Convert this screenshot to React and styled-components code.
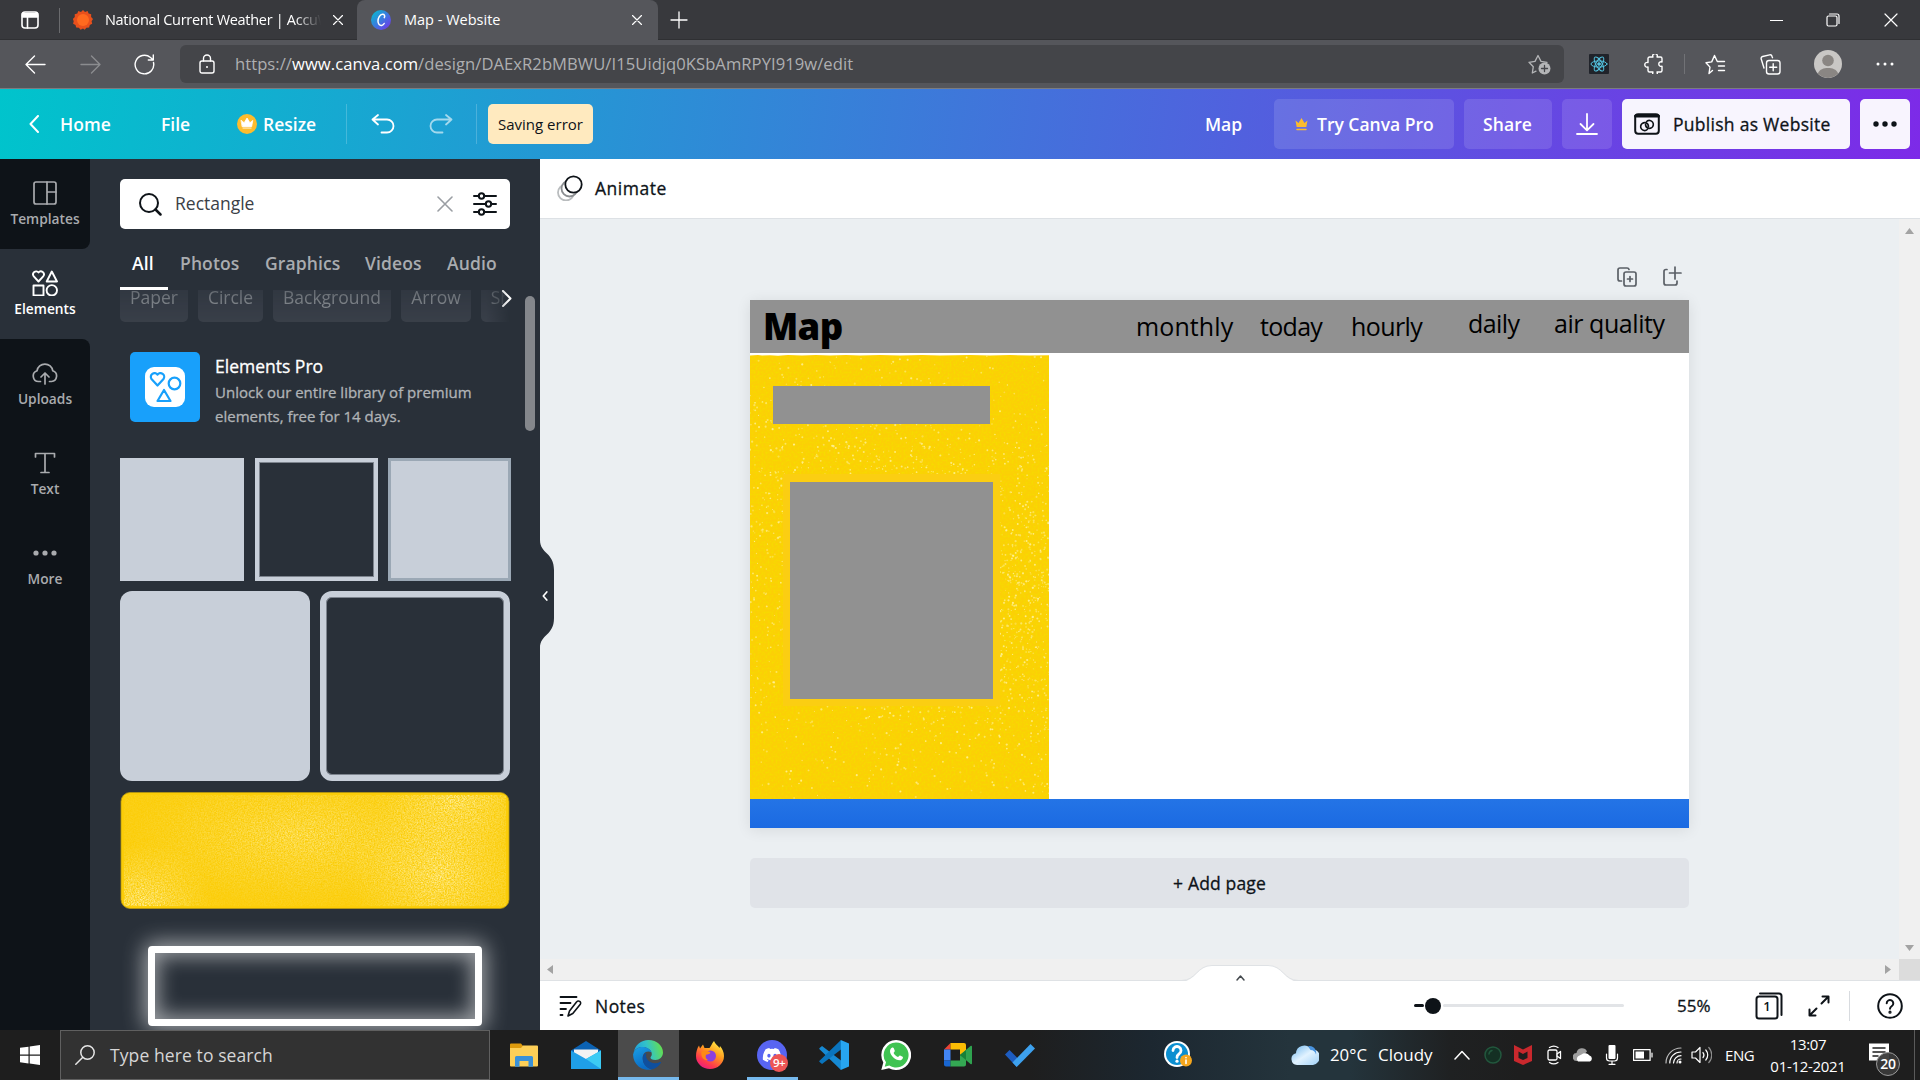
import React from "react";
import styled, { createGlobalStyle, css } from "styled-components";
import { FaDiscord } from "react-icons/fa";

const Global = createGlobalStyle`
  * { box-sizing: border-box; }
  html, body { margin: 0; padding: 0; overflow: hidden; background: #1e1e1e; }
  body { font-family: "Open Sans", "Noto Sans", sans-serif; }
  svg { display: block; flex: none; }
`;

const Screen = styled.div`
  width: 1920px;
  height: 1080px;
  display: flex;
  flex-direction: column;
  overflow: hidden;
`;

const Label = styled.span`
  display: block;
  flex: none;
  white-space: nowrap;
  width: ${(p) => (p.$w ? `${p.$w}px` : "auto")};
  margin-left: ${(p) => p.$ml || 0}px;
  margin-bottom: ${(p) => p.$mb || 0}px;
  font-size: ${(p) => p.$size || 17.5}px;
  font-weight: ${(p) => p.$weight || 400};
  letter-spacing: ${(p) => p.$ls || 0}px;
  line-height: ${(p) => p.$lh || 24}px;
  color: ${(p) => p.$color || "#0e1318"};
  text-align: ${(p) => p.$align || "left"};
  ${(p) => p.$medium && css`-webkit-text-stroke: 0.3px currentColor;`}
`;

const Glyph = styled.svg.attrs((p) => ({
  width: p.$w,
  height: p.$h || p.$w,
  viewBox: `0 0 ${p.$w} ${p.$h || p.$w}`,
  fill: "none",
  strokeLinecap: "round",
  strokeLinejoin: "round",
}))`
  margin-left: ${(p) => p.$ml || 0}px;
  stroke: ${(p) => p.$color || "#fff"};
  stroke-width: ${(p) => p.$sw || 1.4};
`;

const Rule = styled.i`
  flex: none;
  width: 1px;
  height: ${(p) => p.$h}px;
  margin-left: ${(p) => p.$ml || 0}px;
  background: ${(p) => p.$color};
`;

/* ---------- browser chrome ---------- */

const TabStrip = styled.div`
  height: 40px;
  flex: none;
  display: flex;
  align-items: stretch;
  background: #38393d;
  box-shadow: inset 0 -1px 0 #2f3033;
`;

const PassiveTab = styled.div`
  width: 357px;
  display: flex;
  align-items: center;
`;

const FadingTitle = styled.div`
  width: 216px;
  margin-left: 12px;
  overflow: hidden;
  mask-image: linear-gradient(90deg, #000 88%, transparent 100%);
`;

const ActiveTab = styled.div`
  width: 301px;
  display: flex;
  align-items: center;
  background: #55565b;
  border-radius: 8px 8px 0 0;
`;

const StripTail = styled.div`
  flex: 1;
  display: flex;
  align-items: center;
`;

const AddressRow = styled.div`
  height: 49px;
  flex: none;
  display: flex;
  align-items: center;
  background: #55565b;
  border-bottom: 1px solid #7b7c80;
`;

const AddressField = styled.div`
  width: 1384px;
  height: 38px;
  margin-left: 25px;
  display: flex;
  align-items: center;
  background: #444549;
  border-radius: 6px;
`;

const Url = styled.div`
  width: 1293px;
  margin-left: 20px;
  font-size: 16.6px;
  line-height: 24px;
  letter-spacing: 0.05px;
  color: #aeafb1;
  white-space: nowrap;
  b { font-weight: 400; color: #fff; }
`;

function Browser() {
  return (
    <>
      <TabStrip>
        <PassiveTab>
          <Glyph $w={18} $ml={21} $sw={1.6}>
            <rect x="1" y="1" width="16" height="16" rx="3" />
            <path d="M1.5 2.6H16.5V6H1.5Z" fill="#fff" />
            <path d="M6.5 6V17" />
          </Glyph>
          <Rule $h={25} $ml={20} $color="#6a6b6e" />
          <Glyph $w={20} $ml={13} $color="none">
            <path
              d="M10 0l2 2 2.600-1 1 2.600 2.600.6-.1 2.700 1.900 2-1.400 2.300.6 2.600-2.400 1.200-.7 2.600-2.700.1-1.700 2.100L10 18.500 7.600 19.800l-1.700-2.100-2.700-.1-.7-2.600L.1 13.800l.6-2.600L-.1 8.900l1.900-2L1.700 4.200l2.600-.6 1-2.600 2.700 1z"
              fill="#e8501c"
            />
            <circle cx="10" cy="10" r="6" fill="#ff6a1f" />
          </Glyph>
          <FadingTitle>
            <Label $size={14.5} $ls={-0.3} $color="#fff">National Current Weather | AccuWeather</Label>
          </FadingTitle>
          <Glyph $w={10} $ml={12} $sw={1.2}><path d="M.5.500l9 9M9.500.500l-9 9" /></Glyph>
        </PassiveTab>
        <ActiveTab>
          <Glyph $w={20} $ml={14} $color="none">
            <defs>
              <linearGradient id="cv" x1="0" y1="0" x2="1" y2="1">
                <stop offset="0" stopColor="#00c4cc" />
                <stop offset=".5" stopColor="#3a7be0" />
                <stop offset="1" stopColor="#7d2ae8" />
              </linearGradient>
            </defs>
            <circle cx="10" cy="10" r="10" fill="url(#cv)" />
            <path d="M13.300 7.600c.9-1.700.2-3.500-1.800-3.400C8.900 4.400 6.900 7.900 7 11.200c.1 3 1.700 4.600 3.700 4.200 1.200-.2 2-1 2.500-1.900" stroke="#fff" strokeWidth="1.500" />
          </Glyph>
          <Label $w={98} $ml={13} $size={14.5} $color="#fff">Map - Website</Label>
          <Glyph $w={10} $ml={130} $sw={1.2}><path d="M.5.500l9 9M9.500.500l-9 9" /></Glyph>
        </ActiveTab>
        <StripTail>
          <Glyph $w={18} $ml={12} $sw={1.3}><path d="M9 1V17M1 9H17" /></Glyph>
          <Glyph $w={13} $ml={1082} $sw={1.200}><path d="M0 6.500H13" /></Glyph>
          <Glyph $w={14} $ml={43} $sw={1.2}>
            <rect x="1" y="3" width="10" height="10" rx="1.500" />
            <path d="M3.500 1H11a2 2 0 0 1 2 2v7.500" />
          </Glyph>
          <Glyph $w={14} $ml={44} $sw={1.2}><path d="M1 1l12 12M13 1L1 13" /></Glyph>
        </StripTail>
      </TabStrip>
      <AddressRow>
        <Glyph $w={21} $ml={25} $sw={1.4}><path d="M20 10.500H1M9.500 2L1 10.500 9.500 19" /></Glyph>
        <Glyph $w={21} $ml={34} $sw={1.400} $color="#8b8c8f"><path d="M1 10.500H20M11.500 2L20 10.500 11.500 19" /></Glyph>
        <Glyph $w={21} $ml={33} $sw={1.400}>
          <path d="M19.500 8.500A9.300 9.300 0 1 1 16.500 3.500L19 5.700M19.300 1V6H14.300" />
        </Glyph>
        <AddressField>
          <Glyph $w={16} $h={20} $ml={19} $sw={1.400}>
            <rect x="1" y="7" width="14" height="12" rx="2" />
            <path d="M4.500 7V4.500a3.500 3.500 0 0 1 7 0V7" />
            <circle cx="8" cy="13" r="1" fill="#fff" stroke="none" />
          </Glyph>
          <Url>https://<b>www.canva.com</b>/design/DAExR2bMBWU/I15Uidjq0KSbAmRPYI919w/edit</Url>
          <Glyph $w={23} $h={22} $color="#b4b5b7" $sw={1.300}>
            <path d="M8 18.200L4.300 20l1-6.300L1 9.300l6-.9L10 2.500l3 5.900 6 .9-1.500 1.500" />
            <circle cx="16.500" cy="15.500" r="6" fill="#b4b5b7" stroke="none" />
            <path d="M16.500 12.500v6M13.500 15.500h6" stroke="#444549" />
          </Glyph>
        </AddressField>
        <Glyph $w={20} $ml={25} $color="#53c1de" $sw={1}>
          <rect width="20" height="20" rx="1" fill="#20232a" stroke="none" />
          <ellipse cx="10" cy="10" rx="8" ry="3.100" />
          <ellipse cx="10" cy="10" rx="8" ry="3.100" transform="rotate(60 10 10)" />
          <ellipse cx="10" cy="10" rx="8" ry="3.100" transform="rotate(120 10 10)" />
          <circle cx="10" cy="10" r="1.300" fill="#53c1de" />
        </Glyph>
        <Glyph $w={20} $ml={35} $sw={1.400}>
          <path d="M4 4.500a1.500 1.500 0 0 1 1.500-1.500H9a2.300 2.300 0 1 1 4 0h3.500A1.500 1.500 0 0 1 18 4.500V8a2.300 2.300 0 1 0 0 4.200v4.300a1.500 1.500 0 0 1-1.500 1.500H13a2.300 2.300 0 1 1-4 0H5.500A1.500 1.500 0 0 1 4 16.500V13a2.400 2.400 0 1 1 0-4.500z" />
        </Glyph>
        <Rule $h={20} $ml={20} $color="#717276" />
        <Glyph $w={21} $ml={20} $sw={1.400}>
          <path d="M7.500 16.500L4 19.500l1-6.400L1 8.700l5.700-.8L9.500 1.500l2.800 6H19.500M13.500 12h6M13.500 16.500h6" />
        </Glyph>
        <Glyph $w={21} $ml={34} $sw={1.400}>
          <rect x="6.500" y="6.500" width="13.500" height="13.500" rx="2.500" />
          <path d="M13.200 9.800v7M9.700 13.300h7M4 14L1.200 5a2 2 0 0 1 1.400-2.500l7-1.600a2 2 0 0 1 2.400 1.400l.5 1.400" />
        </Glyph>
        <Glyph $w={28} $ml={33} $color="none">
          <circle cx="14" cy="14" r="14" fill="#c9c7c5" />
          <circle cx="14" cy="10.500" r="5.800" fill="#8a8683" />
          <path d="M3.800 23.500c2-4.300 5.800-5.500 10.200-5.500s8.200 1.200 10.200 5.500A14 14 0 0 1 3.800 23.500z" fill="#8a8683" />
        </Glyph>
        <Glyph $w={18} $h={4} $ml={34} $color="none">
          <g fill="#fff"><circle cx="2" cy="2" r="1.500" /><circle cx="9" cy="2" r="1.500" /><circle cx="16" cy="2" r="1.500" /></g>
        </Glyph>
      </AddressRow>
    </>
  );
}

/* ---------- editor header ---------- */

const EditorHeader = styled.header`
  height: 70px;
  flex: none;
  display: flex;
  align-items: center;
  background: linear-gradient(98deg, #00c4cc, #7d2ae8);
`;

const SavingNote = styled.div`
  width: 105px;
  height: 40px;
  margin-left: 11px;
  display: flex;
  align-items: center;
  background: #ffeabf;
  border-radius: 5px;
`;

const HeaderButton = styled.div`
  width: ${(p) => p.$w}px;
  height: 50px;
  margin-left: ${(p) => p.$ml ?? 10}px;
  display: flex;
  align-items: center;
  border-radius: 5px;
  background: ${(p) => (p.$solid ? "rgba(255,255,255,.95)" : "rgba(255,255,255,.12)")};
`;

const CROWN = "M.5 2.500l3 2.500L6.500 0l3 5 3-2.500L11.300 9H1.700z";

function Header() {
  return (
    <EditorHeader>
      <Glyph $w={10} $h={18} $ml={29} $sw={2}><path d="M9 1L1.500 9 9 17" /></Glyph>
      <Label $w={101} $ml={21} $weight={600} $ls={0.1} $color="#fff">Home</Label>
      <Label $w={76} $weight={600} $color="#fff">File</Label>
      <Glyph $w={20} $color="none">
        <circle cx="10" cy="10" r="10" fill="#fdbc2d" />
        <path d={`${CROWN}M2.300 10.500h8.400`} transform="translate(3.800 4) scale(.96)" fill="#fff" stroke="#fff" strokeWidth=".8" />
      </Glyph>
      <Label $w={83} $ml={6} $weight={600} $color="#fff">Resize</Label>
      <Rule $h={40} $color="rgba(255,255,255,.2)" />
      <Glyph $w={24} $h={22} $ml={24} $sw={1.800}>
        <path d="M7 2L1.500 6.500 7 11.500M1.500 6.500H16a6.500 6.500 0 0 1 0 13H10.500" />
      </Glyph>
      <Glyph $w={24} $h={22} $ml={34} $sw={1.800} $color="rgba(255,255,255,.6)">
        <path d="M17 2L22.500 6.500 17 11.500M22.500 6.500H8a6.500 6.500 0 0 0 0 13H13.500" />
      </Glyph>
      <Rule $h={40} $ml={23} $color="rgba(255,255,255,.2)" />
      <SavingNote><Label $ml={10} $size={15}>Saving error</Label></SavingNote>
      <Label $w={69} $ml={612} $weight={600} $color="#fff">Map</Label>
      <HeaderButton $w={180} $ml={0}>
        <Glyph $w={13} $ml={21} $color="none">
          <path d={CROWN} fill="#fdbc2d" />
          <path d="M2 11.500h9" stroke="#fdbc2d" strokeWidth="1.500" />
        </Glyph>
        <Label $ml={9} $weight={600} $color="#fff">Try Canva Pro</Label>
      </HeaderButton>
      <HeaderButton $w={88}><Label $ml={19} $weight={600} $ls={0.1} $color="#fff">Share</Label></HeaderButton>
      <HeaderButton $w={50}>
        <Glyph $w={22} $ml={14} $sw={1.800}><path d="M11 1V17M4.500 11L11 17.300 17.500 11M1 21H21" /></Glyph>
      </HeaderButton>
      <HeaderButton $w={228} $solid>
        <Glyph $w={26} $h={22} $ml={12} $color="#0e1318" $sw={2}>
          <rect x="1.200" y="1.200" width="23.600" height="19.600" rx="3" />
          <path d="M1.500 3H24.500" strokeWidth="3" />
          <g strokeWidth="1.600">
            <path d="M13.800 15.800a3.700 3.700 0 0 1-3.800 1.700 4 4 0 0 1-3.300-4.600 4 4 0 0 1 4.600-3.200 4 4 0 0 1 3.200 4" />
            <path d="M12.200 9.200a3.700 3.700 0 0 1 3.800-1.700 4 4 0 0 1 3.300 4.600 4 4 0 0 1-4.600 3.200 4 4 0 0 1-3.200-4" />
          </g>
        </Glyph>
        <Label $ml={13} $medium $ls={0.28}>Publish as Website</Label>
      </HeaderButton>
      <HeaderButton $w={50} $solid>
        <Glyph $w={24} $h={6} $ml={13} $color="none">
          <g fill="#0e1318"><circle cx="3" cy="3" r="2.700" /><circle cx="12" cy="3" r="2.700" /><circle cx="21" cy="3" r="2.700" /></g>
        </Glyph>
      </HeaderButton>
    </EditorHeader>
  );
}

/* ---------- left rail ---------- */

const Editor = styled.div`
  height: 871px;
  flex: none;
  display: flex;
`;

const Rail = styled.nav`
  width: 90px;
  flex: none;
  background: #293039;
  display: flex;
  flex-direction: column;
`;

const RailGroup = styled.div`
  flex: ${(p) => (p.$grow ? 1 : "none")};
  background: ${(p) => (p.$active ? "#293039" : "#0e1318")};
  border-radius: ${(p) => p.$radius || 0};
`;

const RailItem = styled.div`
  height: 90px;
  padding-top: 19px;
  display: flex;
  flex-direction: column;
  align-items: center;
`;

const RailIcon = styled.div`
  height: 30px;
  display: flex;
  align-items: center;
`;

const MUTED = "#a9abae";

function RailEntry({ name, active, children }) {
  return (
    <RailItem>
      <RailIcon>{children}</RailIcon>
      <Label $size={13.75} $weight={600} $lh={22} $color={active ? "#fff" : MUTED}>{name}</Label>
    </RailItem>
  );
}

function LeftRail() {
  return (
    <Rail>
      <RailGroup $radius="0 0 8px 0">
        <RailEntry name="Templates">
          <Glyph $w={24} $color={MUTED} $sw={1.700}>
            <rect x="1" y="1" width="22" height="22" rx="2" /><path d="M14 1V23M14 11H23" />
          </Glyph>
        </RailEntry>
      </RailGroup>
      <RailGroup $active>
        <RailEntry name="Elements" active>
          <Glyph $w={26} $sw={1.900}>
            <path d="M6.500 11.500L1.800 6.300a3 3 0 0 1 4.700-3.800 3 3 0 0 1 4.700 3.800zM19.800 1.500L25 11.500H14.700zM1.500 15.500h10v10h-10z" />
            <circle cx="19.800" cy="20.300" r="5.200" />
          </Glyph>
        </RailEntry>
      </RailGroup>
      <RailGroup $radius="0 8px 0 0" $grow>
        <RailEntry name="Uploads">
          <Glyph $w={26} $h={24} $color={MUTED} $sw={1.700}>
            <path d="M8.500 20.500H6.500A5.500 5.500 0 0 1 5 9.800 8 8 0 0 1 20.800 9.800 5.500 5.500 0 0 1 19.500 20.500H17.500M13 23V12.500M9 16l4-4 4 4" />
          </Glyph>
        </RailEntry>
        <RailEntry name="Text">
          <Glyph $w={22} $color={MUTED} $sw={1.700}><path d="M1.500 5V1.500H20.500V5M11 1.500V20.500M7 20.500H15" /></Glyph>
        </RailEntry>
        <RailEntry name="More">
          <Glyph $w={24} $h={6} $color="none">
            <g fill={MUTED}><circle cx="3" cy="3" r="2.600" /><circle cx="12" cy="3" r="2.600" /><circle cx="21" cy="3" r="2.600" /></g>
          </Glyph>
        </RailEntry>
      </RailGroup>
    </Rail>
  );
}

/* ---------- elements panel ---------- */

const Panel = styled.aside`
  width: 450px;
  flex: none;
  display: flex;
  background: #293039;
  overflow: hidden;
`;

const PanelBody = styled.div`
  width: 392px;
  margin-left: 30px;
  padding-top: 20px;
  display: flex;
  flex-direction: column;
`;

const SearchBox = styled.div`
  width: 390px;
  height: 50px;
  flex: none;
  display: flex;
  align-items: center;
  padding-bottom: 1px;
  background: #fff;
  border-radius: 5px;
`;

const Tabs = styled.div`
  height: 61px;
  flex: none;
  display: flex;
  align-items: stretch;
`;

const Tab = styled.div`
  width: ${(p) => p.$w}px;
  padding: 22px 0 0 12px;
  border-bottom: 3px solid ${(p) => (p.$active ? "#fff" : "transparent")};
`;

const ChipRow = styled.div`
  height: 32px;
  flex: none;
  display: flex;
  align-items: flex-start;
  overflow: hidden;
`;

const Chips = styled.div`
  width: 390px;
  flex: none;
  margin-top: -18px;
  display: flex;
  gap: 10px;
  overflow: hidden;
  mask-image: linear-gradient(180deg, rgba(0,0,0,.5) 34%, #000 100%), linear-gradient(90deg, #000 366px, transparent 390px);
  mask-composite: intersect;
`;

const Chip = styled.div`
  width: ${(p) => p.$w}px;
  height: 50px;
  flex: none;
  display: flex;
  align-items: center;
  justify-content: center;
  border-radius: 5px;
  background: #393f49;
`;

const ChipArrow = styled.div`
  margin-left: -8px;
`;

const ProBanner = styled.div`
  height: 136px;
  flex: none;
  padding: 30px 0 0 10px;
  display: flex;
`;

const ProIcon = styled.div`
  width: 70px;
  height: 70px;
  display: flex;
  align-items: center;
  justify-content: center;
  border-radius: 5px;
  background: #18a0fb;
`;

const ProText = styled.div`
  margin: 2px 0 0 15px;
`;

const Shelf = styled.div`
  flex: none;
  display: flex;
  justify-content: space-between;
  width: ${(p) => p.$w}px;
  margin-bottom: 10px;
`;

const Square = styled.div`
  width: ${(p) => p.$s}px;
  height: ${(p) => p.$h || p.$s}px;
  border-radius: ${(p) => p.$r || 0}px;
  border: ${(p) => p.$border || "none"};
  background: ${(p) => (p.$hollow ? "transparent" : "#c8cfd9")};
  ${(p) => p.$hollow && css`box-shadow: inset 0 0 0 1px #7d848e;`}
`;

const NeonFrame = styled.div`
  width: 334px;
  height: 80px;
  flex: none;
  margin: 36px 0 0 28px;
  border: 7px solid #fff;
  border-radius: 4px;
  box-shadow: 0 0 22px 3px rgba(255,255,255,.6), inset 0 0 20px 3px rgba(255,255,255,.55);
`;

const PanelScroll = styled.div`
  width: 10px;
  height: 135px;
  margin: 137px 0 0 13px;
  border-radius: 5px;
  background: #84878c;
`;

function seeded(seed) {
  let s = seed;
  return () => {
    s = (s * 16807) % 2147483647;
    return s / 2147483647;
  };
}

function BrushedSwatch() {
  return (
    <svg width="390" height="119" viewBox="0 0 390 119">
      <defs>
        <filter id="swGrain" x="0" y="0" width="100%" height="100%">
          <feTurbulence type="fractalNoise" baseFrequency=".7" numOctaves="3" seed="4" />
          <feColorMatrix values="0 0 0 0 1  0 0 0 0 .88  0 0 0 0 .4  1.800 0 0 0 -.45" />
        </filter>
        <radialGradient id="swGlow">
          <stop offset="0" stopColor="#fff" stopOpacity="1" />
          <stop offset=".5" stopColor="#fff" stopOpacity=".45" />
          <stop offset="1" stopColor="#fff" stopOpacity="0" />
        </radialGradient>
        <mask id="swMask">
          <rect width="390" height="119" fill="#222" />
          <g fill="url(#swGlow)">
            <ellipse cx="22" cy="112" rx="70" ry="60" />
            <ellipse cx="335" cy="8" rx="80" ry="60" />
            <ellipse cx="318" cy="82" rx="90" ry="75" />
            <ellipse cx="180" cy="45" rx="170" ry="70" opacity=".7" />
          </g>
        </mask>
      </defs>
      <rect x="1" y="1.500" width="388" height="116" rx="9" fill="#fbcd08" stroke="#b89810" strokeWidth=".8" />
      <g mask="url(#swMask)"><rect x="4" y="4" width="382" height="111" filter="url(#swGrain)" /></g>
    </svg>
  );
}

const TABS = [["All", 48], ["Photos", 85], ["Graphics", 100], ["Videos", 82], ["Audio", 75]];
const CHIPS = [["Paper", 68], ["Circle", 65], ["Background", 118], ["Arrow", 70], ["Shape", 70]];

function ElementsPanel() {
  return (
    <Panel>
      <PanelBody>
        <SearchBox>
          <Glyph $w={24} $ml={18} $color="#0e1318" $sw={2}><circle cx="11" cy="11" r="9" /><path d="M17.500 17.500l5 5" strokeWidth="2.500" /></Glyph>
          <Label $w={262} $ml={13} $mb={1} $color="#3b4046">Rectangle</Label>
          <Glyph $w={16} $color="#9a9ea3" $sw={1.600}><path d="M1 1l14 14M15 1L1 15" /></Glyph>
          <Glyph $w={24} $ml={20} $color="#0e1318" $sw={2}>
            <path d="M1 4H6M11 4H23M1 12H13M18 12H23M1 20H6M11 20H23" />
            <circle cx="8.500" cy="4" r="2.700" /><circle cx="15.500" cy="12" r="2.700" /><circle cx="8.500" cy="20" r="2.700" />
          </Glyph>
        </SearchBox>
        <Tabs>
          {TABS.map(([name, w], i) => (
            <Tab key={name} $w={w} $active={i === 0}>
              <Label $weight={600} $ls={0.12} $color={i === 0 ? "#fff" : "#a9acb0"}>{name}</Label>
            </Tab>
          ))}
        </Tabs>
        <ChipRow>
          <Chips>
            {CHIPS.map(([name, w]) => (
              <Chip key={name} $w={w}><Label $color="#9b9fa4">{name}</Label></Chip>
            ))}
          </Chips>
          <ChipArrow><Glyph $w={10} $h={17} $sw={2}><path d="M1 1L8.500 8.500 1 16" /></Glyph></ChipArrow>
        </ChipRow>
        <ProBanner>
          <ProIcon>
            <Glyph $w={40} $color="#18a0fb" $sw={2.200}>
              <rect width="40" height="40" rx="9" fill="#fff" stroke="none" />
              <path d="M12.500 18.500L6.500 12a3.600 3.600 0 0 1 6-4.300 3.600 3.600 0 0 1 6 4.300zM19 23L25.500 34H12.500z" />
              <circle cx="29.500" cy="16.500" r="5.800" />
            </Glyph>
          </ProIcon>
          <ProText>
            <Label $medium $mb={2} $color="#fff">Elements Pro</Label>
            <Label $size={15} $medium $color="#b0b3b6">Unlock our entire library of premium</Label>
            <Label $size={15} $medium $color="#b0b3b6">elements, free for 14 days.</Label>
          </ProText>
        </ProBanner>
        <Shelf $w={391}>
          <Square $s={124} $h={123} />
          <Square $s={123} $hollow $border="4px solid #c8cfd9" />
          <Square $s={123} $border="3px solid #9ba8b5" />
        </Shelf>
        <Shelf $w={390}>
          <Square $s={190} $r={12} />
          <Square $s={190} $r={12} $hollow $border="6px solid #c8cfd9" />
        </Shelf>
        <BrushedSwatch />
        <NeonFrame />
      </PanelBody>
      <PanelScroll />
    </Panel>
  );
}

/* ---------- workspace ---------- */

const Workspace = styled.main`
  position: relative;
  width: 1380px;
  flex: none;
  display: flex;
  flex-direction: column;
  background: #ebeff2;
`;

const CollapseHandle = styled.div`
  position: absolute;
  left: 0;
  top: 381px;
  z-index: 2;
`;

const ContextBar = styled.div`
  height: 60px;
  flex: none;
  display: flex;
  align-items: center;
  padding-bottom: 2px;
  background: #fff;
  border-bottom: 1px solid #dde1e5;
`;

const StageRow = styled.div`
  height: 740px;
  flex: none;
  display: flex;
`;

const Stage = styled.div`
  width: 1359px;
  padding: 47px 210px 0;
`;

const PageTools = styled.div`
  height: 34px;
  display: flex;
  justify-content: flex-end;
  padding-right: 7px;
`;

const Artboard = styled.div`
  position: relative;
  width: 939px;
  height: 528px;
  background: #fff;
  box-shadow: 0 2px 14px rgba(14,19,24,.09);
`;

const Block = styled.div`
  position: absolute;
  left: ${(p) => p.$x}px;
  top: ${(p) => p.$y}px;
  width: ${(p) => p.$w}px;
  height: ${(p) => p.$h}px;
  background: ${(p) => p.$bg || "#919191"};
`;

const Placed = styled.div`
  position: absolute;
  left: ${(p) => p.$x}px;
  top: ${(p) => p.$y}px;
`;

const AddPage = styled.div`
  width: 939px;
  height: 50px;
  margin-top: 30px;
  display: flex;
  align-items: center;
  justify-content: center;
  border-radius: 5px;
  background: #e0e3e8;
`;

const ScrollV = styled.div`
  width: 21px;
  display: flex;
  flex-direction: column;
  align-items: center;
  justify-content: space-between;
  padding: 9px 0 8px;
  background: #f0f0f0;
`;

const ScrollH = styled.div`
  height: 21px;
  flex: none;
  display: flex;
  align-items: center;
  background: #f0f0f0;
`;

const ScrollCorner = styled.div`
  width: 21px;
  height: 21px;
  margin-left: 8px;
  background: #dcdcdc;
`;

const FooterBar = styled.div`
  height: 50px;
  flex: none;
  display: flex;
  align-items: center;
  background: #fff;
  border-top: 1px solid #dfe2e5;
`;

const NotesTab = styled.div`
  position: absolute;
  left: 642px;
  top: 806px;
`;

const Slider = styled.div`
  width: 210px;
  height: 16px;
  margin-left: 768px;
  display: flex;
  align-items: center;
`;

const Track = styled.div`
  width: ${(p) => p.$w}px;
  height: 3px;
  border-radius: 2px;
  background: ${(p) => p.$bg};
`;

const Knob = styled.div`
  width: 16px;
  height: 16px;
  margin: 0 2px 0 1px;
  border-radius: 50%;
  background: #0e1318;
`;

const PageCount = styled.div`
  position: relative;
  width: 28px;
  height: 28px;
  margin-left: 36px;
`;

const PageDigit = styled.div`
  position: absolute;
  left: 0;
  top: 2px;
  width: 24px;
`;

const specks = (() => {
  const r = seeded(77);
  const out = [];
  while (out.length < 3000) {
    const x = r() * 299;
    const y = r() * 444;
    const band = Math.exp(-Math.pow((y - 175 - x * 0.25) / 140, 2));
    const density = 0.06 + band * (0.5 + (0.5 * x) / 299);
    if (r() < density) out.push([x, y, 0.5 + r() * 0.65, 0.35 + r() * 0.5]);
  }
  return out;
})();

function GrainPanel() {
  return (
    <svg width="299" height="445" viewBox="0 0 299 445">
      <defs>
        <filter id="grain" x="0" y="0" width="100%" height="100%">
          <feTurbulence type="fractalNoise" baseFrequency=".5" numOctaves="3" seed="9" />
          <feColorMatrix values="0 0 0 0 .93  0 0 0 0 .7  0 0 0 0 0  3 0 0 0 -1.200" />
        </filter>
      </defs>
      <path d="M0 1.500L8 1 12 1.600 20 1.200 28 1.700 38 .9 52 1.500 66 1.100 80 1.600 96 1 110 1.600 130 1.100 150 1.500 172 1 190 1.500 220 .9 240 1.600 260 1.100 280 1.500 299 1.200V445H0Z" fill="#fccf06" />
      <rect y="2" width="299" height="443" filter="url(#grain)" />
      {specks.map(([x, y, s, o], i) => (
        <circle key={i} cx={x} cy={y + 2} r={s} fill="#fff3a0" opacity={o} />
      ))}
      <rect x="33" y="120" width="217" height="232" fill="#fbce12" />
    </svg>
  );
}

const NAV = [
  ["monthly", 386, 8, 0.1],
  ["today", 510, 8, -0.7],
  ["hourly", 601, 8, -0.6],
  ["daily", 718, 5, -0.6],
  ["air quality", 804, 5, -0.45],
];

function Design() {
  return (
    <Artboard>
      <Block $x={0} $y={0} $w={939} $h={53} />
      <Placed $x={0} $y={54}><GrainPanel /></Placed>
      <Block $x={23} $y={86} $w={217} $h={38} />
      <Block $x={40} $y={182} $w={203} $h={217} />
      <Block $x={0} $y={499} $w={939} $h={29} $bg="linear-gradient(#2474e6, #1b6ae2)" />
      <Placed $x={13} $y={5}><Label $size={36.5} $weight={800} $ls={-0.7} $lh={43} $color="#000">Map</Label></Placed>
      {NAV.map(([name, x, y, ls]) => (
        <Placed key={name} $x={x} $y={y}><Label $size={25} $lh={36} $ls={ls} $color="#000">{name}</Label></Placed>
      ))}
    </Artboard>
  );
}

function Work() {
  return (
    <Workspace>
      <ContextBar>
        <Glyph $w={26} $ml={17} $color="#0e1318" $sw={1.800}>
          <circle cx="9" cy="17.500" r="8" stroke="#b9bcbe" />
          <circle cx="12.500" cy="13.500" r="8" stroke="#8b8e91" fill="#fff" />
          <circle cx="16.500" cy="9.500" r="8.200" fill="#fff" />
        </Glyph>
        <Label $ml={12} $medium $ls={0.5}>Animate</Label>
      </ContextBar>
      <StageRow>
        <Stage>
          <PageTools>
            <Glyph $w={20} $h={21} $color="#5b6067" $sw={1.700}>
              <rect x="7" y="6" width="12" height="14" rx="2" />
              <path d="M13 10.500v5M10.500 13h5M4.500 15H3a2 2 0 0 1-2-2V4a2 2 0 0 1 2-2h7a2 2 0 0 1 2 1.500" />
            </Glyph>
            <Glyph $w={20} $h={21} $ml={25} $color="#5b6067" $sw={1.700}>
              <path d="M13 1V13M7.500 7H19M5 3.500H4a2 2 0 0 0-2 2V17a2 2 0 0 0 2 2H13a2 2 0 0 0 2-2V15" />
            </Glyph>
          </PageTools>
          <Design />
          <AddPage><Label $medium $ls={0.15}>+ Add page</Label></AddPage>
        </Stage>
        <ScrollV>
          <Glyph $w={9} $h={6} $color="none"><path d="M4.500 0L9 6H0z" fill="#a3a3a3" /></Glyph>
          <Glyph $w={9} $h={6} $color="none"><path d="M4.500 6L9 0H0z" fill="#a3a3a3" /></Glyph>
        </ScrollV>
      </StageRow>
      <ScrollH>
        <Glyph $w={6} $h={9} $ml={7} $color="none"><path d="M0 4.500L6 0V9z" fill="#a3a3a3" /></Glyph>
        <Glyph $w={6} $h={9} $ml={1332} $color="none"><path d="M6 4.500L0 0V9z" fill="#a3a3a3" /></Glyph>
        <ScrollCorner />
      </ScrollH>
      <FooterBar>
        <Glyph $w={24} $h={22} $ml={19} $color="#0e1318" $sw={1.800}>
          <path d="M1.500 2H17.500M1.500 8H11.500M1.500 14H7M1.500 20H3.500" />
          <path d="M20.500 6.300a2 2 0 0 0-2.800.5L10.500 16l-1.500 5 4.800-2.500L21.300 9.200a2 2 0 0 0-.8-2.900z" strokeWidth="1.600" />
        </Glyph>
        <Label $w={51} $ml={12} $medium $ls={0.45}>Notes</Label>
        <Slider>
          <Track $w={10} $bg="#0e1318" />
          <Knob />
          <Track $w={181} $bg="#e2e4e7" />
        </Slider>
        <Label $w={42} $ml={53} $medium $size={17}>55%</Label>
        <PageCount>
          <Glyph $w={28} $color="#0e1318" $sw={2}>
            <rect x="1.500" y="4.500" width="21" height="22" rx="2.500" />
            <path d="M5 1.500H24a2.500 2.500 0 0 1 2.500 2.500V23" />
          </Glyph>
          <PageDigit><Label $size={13} $weight={600} $align="center">1</Label></PageDigit>
        </PageCount>
        <Glyph $w={22} $ml={25} $color="#0e1318" $sw={2}>
          <path d="M13.500 8.500L20 2M14.500 1.500H20.500V7.500M8.500 13.500L2 20M7.500 20.500H1.500V14.500" />
        </Glyph>
        <Rule $h={30} $ml={19} $color="#d8dbdf" />
        <Glyph $w={26} $ml={27} $color="#0e1318" $sw={2}>
          <circle cx="13" cy="13" r="11.800" />
          <path d="M9.700 10.300a3.300 3.300 0 1 1 5.200 2.700c-1.300.9-1.900 1.300-1.900 2.800" />
          <circle cx="13" cy="19.200" r=".6" fill="#0e1318" />
        </Glyph>
      </FooterBar>
      <NotesTab>
        <Glyph $w={116} $h={18} $color="none">
          <path d="M0 16.500C14 16.500 15 .5 30 .5H86C101 .5 102 16.500 116 16.500V18H0Z" fill="#fff" />
          <path d="M0 15.500C14 15.500 15 .5 30 .5H86C101 .5 102 15.500 116 15.500" stroke="#dfe2e5" strokeWidth="1" />
          <path d="M55 15L58.500 11 62 15" stroke="#43484d" strokeWidth="1.500" />
        </Glyph>
      </NotesTab>
      <CollapseHandle>
        <Glyph $w={14} $h={108} $color="none">
          <path d="M0 0C0 14 14 12 14 30V78C14 96 0 94 0 108Z" fill="#293039" />
          <path d="M6.800 52L3.300 56 6.800 60" stroke="#fff" strokeWidth="1.700" />
        </Glyph>
      </CollapseHandle>
    </Workspace>
  );
}

/* ---------- taskbar ---------- */

const Taskbar = styled.footer`
  height: 50px;
  flex: none;
  display: flex;
  align-items: center;
  background: linear-gradient(90deg, #1e1e1e 1030px, #1c2730 1150px, #24343c 1290px, #24343c 1350px, #1f2122 1450px, #1e1e1e 1520px);
`;

const StartSlot = styled.div`
  width: 60px;
  padding-left: 20px;
`;

const TaskSearch = styled.div`
  width: 430px;
  height: 50px;
  display: flex;
  align-items: center;
  background: #323232;
  border: 1px solid #606060;
`;

const AppSlot = styled.div`
  width: ${(p) => p.$w || 62}px;
  height: 50px;
  display: flex;
  align-items: center;
  justify-content: center;
  background: ${(p) => (p.$on ? "#4b4b4b" : "transparent")};
  border-bottom: ${(p) => (p.$line ? "3px solid #76b9ed" : "none")};
  padding: ${(p) => (p.$line ? 3 : 0)}px ${(p) => p.$pr || 0}px 0 0;
  margin: ${(p) => p.$m || 0};
`;

const DiscordMark = styled.div`
  position: relative;
  width: 30px;
  height: 30px;
  flex: none;
  display: flex;
  align-items: center;
  justify-content: center;
  border-radius: 50%;
  background: #5865f2;
  color: #fff;
`;

const CountDot = styled.div`
  position: absolute;
  right: -1px;
  bottom: -2px;
  width: 18px;
  height: 18px;
  border-radius: 50%;
  background: #ed5555;
`;

const Tray = styled.div`
  display: flex;
  align-items: center;
`;

const Clock = styled.div`
  width: 86px;
  margin-left: 8px;
`;

const Bell = styled.div`
  position: relative;
  width: 33px;
  height: 34px;
  margin: 7px 0 0 18px;
`;

const BellCount = styled.div`
  position: absolute;
  left: 7px;
  top: 10px;
  width: 24px;
  height: 24px;
  border-radius: 50%;
  border: 1px solid #9a9a9a;
  background: rgba(58,58,58,.95);
`;

function Taskline() {
  return (
    <Taskbar>
      <StartSlot>
        <Glyph $w={20} $color="none">
          <path d="M0 2.800L8.500 1.700V9.500H0zM9.700 1.500L20 0V9.500H9.700zM0 10.700H8.500V18.400L0 17.200zM9.700 10.700H20V20L9.700 18.600z" fill="#fff" />
        </Glyph>
      </StartSlot>
      <TaskSearch>
        <Glyph $w={20} $ml={14} $sw={1.500} $color="#e6e6e6"><circle cx="12.500" cy="7.500" r="6.700" /><path d="M7.800 12.300L.8 19.300" /></Glyph>
        <Label $ml={15} $ls={0.1} $color="#d6d6d6">Type here to search</Label>
      </TaskSearch>
      <AppSlot $w={68}>
        <Glyph $w={28} $h={24} $color="none">
          <path d="M0 1.500A1 1 0 0 1 1 .5H11L13 3V6H0z" fill="#dd9a0c" />
          <path d="M0 5H11L13 2.500H27A1 1 0 0 1 28 3.500V22.500A1 1 0 0 1 27 23.500H1A1 1 0 0 1 0 22.500z" fill="#fdcf57" />
          <path d="M5 23.800V14.500A1.500 1.500 0 0 1 6.500 13H21.500A1.500 1.500 0 0 1 23 14.500V23.800H18.500V18H9.500V23.800z" fill="#3a91d8" />
        </Glyph>
      </AppSlot>
      <AppSlot $w={60} $pr={4}>
        <Glyph $w={30} $h={28} $color="none">
          <path d="M0 9.500L15 0 30 9.500V12H0z" fill="#0b62b3" />
          <path d="M3 8.500H27V20H3z" fill="#f3f3f3" />
          <path d="M0 9.500L15 18 30 9.500V28H0z" fill="#1f9fe8" />
          <path d="M30 9.500L15 18 30 28z" fill="#3ccbf4" />
        </Glyph>
      </AppSlot>
      <AppSlot $w={61} $pr={1} $on $line>
        <Glyph $w={30} $color="none">
          <defs>
            <linearGradient id="eg" x1="0" y1=".6" x2="1" y2=".4"><stop offset="0" stopColor="#1b9de2" /><stop offset=".5" stopColor="#33c3c8" /><stop offset="1" stopColor="#66e04a" /></linearGradient>
            <linearGradient id="eb" x1="0" y1="0" x2=".4" y2="1"><stop offset="0" stopColor="#1ba0e6" /><stop offset="1" stopColor="#0a6ac4" /></linearGradient>
          </defs>
          <path d="M.5 13C2 5 8 0 15.500 0 24 0 30 6 30 12.500 30 17 26.500 20 22.500 20c-3.500 0-5-1.300-5-2.300 0-.9 1.300-1.500 1.300-3.700C18.800 10 14 7 9.500 7 5 7 1.500 9.500.5 13z" fill="url(#eg)" />
          <path d="M.4 13.500C1.500 9.500 5.200 7 9.500 7c4.300 0 7.800 2.200 9 5.200-6-2.200-8.800 1.800-8.800 5.800 0 5 3.300 10 9.300 11.300A15 15 0 0 1 .1 14.500z" fill="url(#eb)" />
          <path d="M13.500 12.800c-2.700 1-3.800 3.200-3.800 5.700 0 6 5 10.900 10 10.700 3.500-1 6.300-3.300 8.300-6.500.3-.6-.2-1-.8-.7C19 25.800 11 20 13.500 12.800z" fill="#0f4f9e" />
        </Glyph>
      </AppSlot>
      <AppSlot $w={62}>
        <Glyph $w={28} $h={28} $color="none">
          <defs>
            <linearGradient id="ff" x1=".8" y1="0" x2=".2" y2="1"><stop offset="0" stopColor="#fff14a" /><stop offset=".4" stopColor="#ff9a1e" /><stop offset=".75" stopColor="#ff3a4c" /><stop offset="1" stopColor="#e6178a" /></linearGradient>
          </defs>
          <path d="M18 0c1 3 4 4.500 5.500 7l.5-2c2.500 3 4 6 4 10A14 13 0 0 1 0 15c0-4 1-7.500 3-10.500l1 3L7 3.500 8.500 7h5c1.500-2 2.500-4.500 4.500-7z" fill="url(#ff)" />
          <circle cx="14.500" cy="15" r="5.500" fill="#8b3fe0" />
          <path d="M5.500 10.500c3-1.500 6-.8 8.500.5 1 .8-.5 2.500-4 2.700-1 2.300 0 4.300 2 5.300-4 1-7.500-3-6.500-8.500z" fill="#ff8a16" />
        </Glyph>
      </AppSlot>
      <AppSlot $w={51} $pr={1} $line $m="0 5px 0 6px">
        <DiscordMark>
          <FaDiscord size={20} />
          <CountDot><Label $size={11.5} $weight={600} $lh={17} $align="center" $ls={-0.5} $color="#fff">9+</Label></CountDot>
        </DiscordMark>
      </AppSlot>
      <AppSlot $w={62}>
        <Glyph $w={30} $color="none">
          <path d="M.5 9.200a1 1 0 0 1 .1-1.300L2.400 6.400a1 1 0 0 1 1.300 0L22 20.500V30z" fill="#1689d3" />
          <path d="M.5 20.800a1 1 0 0 0 .1 1.300L2.400 23.600a1 1 0 0 0 1.300 0L22 9.500V0z" fill="#0a74bd" />
          <path d="M21.800 0L30 3.500V26.500L21.800 30z" fill="#27a5f0" />
        </Glyph>
      </AppSlot>
      <AppSlot $w={62}>
        <Glyph $w={30} $color="none">
          <path d="M15 0A15 15 0 1 1 8 28.200L.3 30 2.300 22.500A15 15 0 0 1 15 0z" fill="#fff" />
          <path d="M15 2.500A12.500 12.500 0 1 1 8.300 25.500L3.700 26.700 5 22.200A12.500 12.500 0 0 1 15 2.500z" fill="#3fc351" />
          <path d="M10.500 8c1-.8 2-.5 2.300.3l1 2.500c.2.800-1 1.700-1.200 2.200.8 1.800 2.300 3.200 4.300 4 .8-.3 1.300-1.800 2.200-1.500l2.500 1.200c1 .5-.2 3.500-2.600 3.600-4.500.3-10-5-10-9 0-1.500.700-2.600 1.500-3.300z" fill="#fff" />
        </Glyph>
      </AppSlot>
      <AppSlot $w={62}>
        <Glyph $w={28} $h={24} $color="none">
          <path d="M0 6.500L6.500 0V6.500z" fill="#ea4335" />
          <path d="M6.500 0H20A2 2 0 0 1 22 2V8L16 12V6.500H6.500z" fill="#fbbc04" />
          <path d="M0 6.500H6.500V17.500H0z" fill="#4285f4" />
          <path d="M0 17.500H6.500V23.500H2A2 2 0 0 1 0 21.500z" fill="#1967d2" />
          <path d="M6.500 17.500H16V12L22 16V21.500A2 2 0 0 1 20 23.500H6.500z" fill="#34a853" />
          <path d="M16 12L26.500 3C27.300 2.300 28 2.800 28 3.500V20.500C28 21.200 27.300 21.700 26.500 21z" fill="#2fa34f" />
          <path d="M16 12L22 7V17z" fill="#188038" />
        </Glyph>
      </AppSlot>
      <AppSlot $w={62}>
        <Glyph $w={30} $h={24} $color="none">
          <path d="M0 11.500L4.500 7 13.500 16 11.700 24z" fill="#1d5cc0" />
          <path d="M11.700 24L7.500 19.500 25.500 1 30 5.500z" fill="#3da1ee" />
        </Glyph>
      </AppSlot>
      <Tray>
        <Glyph $w={28} $h={30} $ml={113} $color="none">
          <circle cx="13" cy="14" r="13" fill="#fff" />
          <circle cx="13" cy="14" r="11" fill="#0c8fd0" />
          <path d="M9 10.500a4 4 0 1 1 6 3.500c-1.500 1-2 1.500-2 3.500" stroke="#fff" strokeWidth="2.800" />
          <circle cx="13" cy="21.200" r="1.600" fill="#fff" />
          <circle cx="22" cy="20.500" r="6" fill="#f5a61d" />
          <path d="M22 20v3.500M22 17.500v.2" stroke="#fff" strokeWidth="1.600" />
        </Glyph>
        <Glyph $w={28} $h={20} $ml={99} $color="none">
          <defs><linearGradient id="wc" x1="0" y1="0" x2="1" y2="1"><stop offset="0" stopColor="#6fb7ee" /><stop offset=".5" stopColor="#e2f3ff" /><stop offset="1" stopColor="#9fd0f7" /></linearGradient></defs>
          <path d="M6 20A6 6 0 0 1 5 8.200 8 8 0 0 1 19.500 4 8 8 0 0 1 22 20z" fill="url(#wc)" />
          <path d="M17 1a7 7 0 0 1 8 8.500A6 6 0 0 0 19.500 5z" fill="#4a94df" />
        </Glyph>
        <Label $w={48} $ml={11} $size={16.8} $lh={26} $color="#fff">20°C</Label>
        <Label $w={76} $size={17} $lh={26} $color="#fff">Cloudy</Label>
        <Glyph $w={16} $h={10} $sw={1.500}><path d="M1 9L8 1.500 15 9" /></Glyph>
        <Glyph $w={18} $ml={14} $color="#22573d" $sw={1.500}><circle cx="9" cy="9" r="8" fill="#143023" /><path d="M5 8a4 4 0 0 1 3-3.500" /></Glyph>
        <Glyph $w={18} $h={20} $ml={12} $color="none"><path d="M0 0L9 4.500 18 0V16L9 20 0 16zM4.500 6.500V13L9 15 13.500 13V6.500L9 9z" fillRule="evenodd" fill="#c9282d" /></Glyph>
        <Glyph $w={15} $h={20} $ml={15} $sw={1.300}>
          <rect x="1" y="5" width="9" height="10" rx="1.500" /><path d="M10 9l3.500-2.500v7L10 11M2.500 2.500C5 .8 8.500.8 11 2.500M2.500 17.500c2.500 1.700 6 1.700 8.500 0" />
        </Glyph>
        <Glyph $w={20} $h={14} $ml={11} $color="none">
          <path d="M4 13a4 4 0 0 1-.5-8A5.500 5.500 0 0 1 14 3.500z" fill="#9f9f9f" />
          <path d="M5 13.500a3.500 3.500 0 0 1 .5-5.500l3-1.500a5.500 5.500 0 0 1 8 1A3.200 3.200 0 0 1 17 13.500z" fill="#fff" />
        </Glyph>
        <Glyph $w={14} $h={20} $ml={12} $sw={1.200}>
          <rect x="3.500" y="0" width="7" height="14" rx="1" fill="#fff" stroke="none" /><path d="M1.500 9v4c0 2 1.500 3 3 3h5c1.500 0 3-1 3-3V9M7 16v3M4 19.300h6" />
        </Glyph>
        <Glyph $w={20} $h={12} $ml={14} $sw={1.200}>
          <rect x=".6" y=".6" width="16.500" height="10.800" /><path d="M2.500 2.500H11V9.500H2.500z" fill="#fff" stroke="none" /><path d="M19 4V8" />
        </Glyph>
        <Glyph $w={17} $h={17} $ml={12} $sw={1.200}>
          <path d="M1 16A15 15 0 0 1 16 1" opacity=".7" /><path d="M4.800 16A11 11 0 0 1 16 5M8.500 16A7.500 7.500 0 0 1 16 8.700" /><path d="M12 16a4 4 0 0 1 4-4" /><circle cx="15" cy="15" r="1.500" fill="#fff" stroke="none" />
        </Glyph>
        <Glyph $w={21} $h={18} $ml={9} $sw={1.200}>
          <path d="M1 6H4.500L9 1.500V16.500L4.500 12H1zM12 6.500a4 4 0 0 1 0 5M14.800 4a7.500 7.500 0 0 1 0 10" /><path d="M17.800 1.500a11 11 0 0 1 0 15" opacity=".5" />
        </Glyph>
        <Label $w={32} $ml={13} $size={15} $ls={-0.4} $color="#fff">ENG</Label>
        <Clock>
          <Label $size={15} $lh={22} $ls={-0.3} $align="center" $color="#fff">13:07</Label>
          <Label $size={15} $lh={22} $ls={-0.3} $align="center" $color="#fff">01-12-2021</Label>
        </Clock>
        <Bell>
          <Glyph $w={20} $h={20} $color="none">
            <path d="M0 1.500H20V18.500H0z" fill="#fff" />
            <path d="M4 6H16M4 10H16M4 14H9" stroke="#1e1e1e" strokeWidth="1.500" />
          </Glyph>
          <BellCount><Label $size={14} $weight={600} $lh={22} $ls={-0.3} $align="center" $color="#fff">20</Label></BellCount>
        </Bell>
        <Rule $h={50} $ml={12} $color="#5a5a5a" />
      </Tray>
    </Taskbar>
  );
}

export default function App() {
  return (
    <>
      <Global />
      <Screen>
        <Browser />
        <Header />
        <Editor>
          <LeftRail />
          <ElementsPanel />
          <Work />
        </Editor>
        <Taskline />
      </Screen>
    </>
  );
}
